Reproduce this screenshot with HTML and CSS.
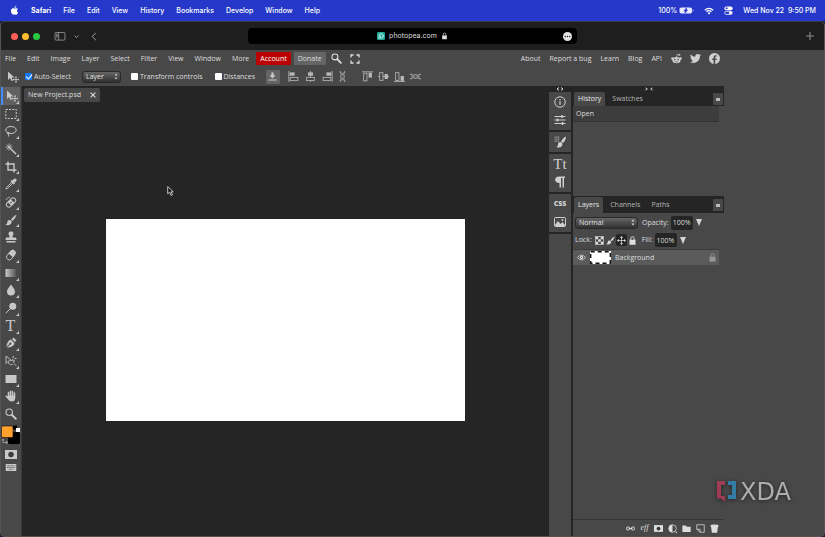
FILE: index.html
```html
<!DOCTYPE html>
<html lang="en">
<head>
<meta charset="utf-8">
<title>Photopea</title>
<link rel="stylesheet" href="styles.css">
</head>
<body>
<svg class="defs" aria-hidden="true">
  <symbol id="move" viewBox="0 0 24 24"><path fill="currentColor" d="M2 1v17l4-4 3 6 3-1-3-6h6z"/><path d="M18 12v10M13 17h10" stroke="currentColor" stroke-width="1.600"/><path fill="currentColor" d="M18 10l2.500 3h-5zM18 24l2.500-3h-5zM11 17l3-2.500v5zM24 17l-2-2.500v5z"/></symbol>
  <symbol id="updown" viewBox="0 0 8 12"><path fill="currentColor" d="M4 0l3 4H1zM4 12l3-4H1z"/></symbol>
  <symbol id="lock" viewBox="0 0 24 24"><path fill="currentColor" d="M4 10h16v13H4z"/><path d="M7.500 11V7a4.500 5 0 0 1 9 0v4" fill="none" stroke="currentColor" stroke-width="2.600"/></symbol>
  <symbol id="search" viewBox="0 0 24 24"><circle cx="8.500" cy="8.500" r="6.500" fill="none" stroke="currentColor" stroke-width="2.200"/><path d="M13.500 13.500l8 8" stroke="currentColor" stroke-width="4" stroke-linecap="round"/></symbol>
  <symbol id="brush" viewBox="0 0 24 24"><path fill="currentColor" d="M23 1c-4 2-8 6-11 10l3 3c4-4 7-8 8-13zM10.500 12c-4-1-6 2-6 5 0 2-2 4-4 4 5 3 13 1 13-6z"/></symbol>
  <symbol id="corner" viewBox="0 0 4 4"><path fill="currentColor" d="M4 0v4H0z"/></symbol>
</svg>

<header class="sysbar">
  <nav class="sysmenu" aria-label="System">
    <svg class="apple" viewBox="0 0 24 24"><path fill="#fff" d="M17 0c0 3-2 5-5 5 0-3 2-5 5-5zM21.500 17c-2 4-4 7-6.500 6-1.500-.7-3-.7-4.500 0-4 1-8-5-8-10.500 0-6 5-8 9-6 1 .5 2 .4 3 0 2.500-1.200 5-.5 6.500 1.500-4 3-3 7 .5 9z"/></svg>
    <a href="#"><b>Safari</b></a><a href="#">File</a><a href="#">Edit</a><a href="#">View</a><a href="#">History</a><a href="#">Bookmarks</a><a href="#">Develop</a><a href="#">Window</a><a href="#">Help</a>
  </nav>
  <div class="sysstatus">
    <span class="battery">100%<svg viewBox="0 0 30 14"><rect x="1" y="1" width="25" height="12" rx="3.500" fill="#e8ebff"/><path d="M27.500 5v4l2-2z" fill="#fff"/><path d="M15 2L10 8h3l-1 4 5-6h-3z" fill="#2538c9" stroke="#2538c9" stroke-width="1.500"/></svg></span>
    <svg class="wifi" viewBox="0 0 24 18"><g fill="none" stroke="#fff" stroke-width="3"><path d="M2 7q10-9 20 0M6 11q6-5.500 12 0"/></g><path fill="#fff" d="M8.500 13.500q3.500-3 7 0L12 17.500z"/></svg>
    <svg class="toggles" viewBox="0 0 24 24"><rect x="1" y="1" width="22" height="10" rx="5" fill="#fff"/><circle cx="7" cy="6" r="2.800" fill="#2538c9"/><rect x="2" y="14" width="20" height="8.500" rx="4" fill="none" stroke="#fff" stroke-width="2"/><circle cx="17" cy="18" r="4" fill="#fff"/></svg>
    <time>Wed Nov 22&nbsp; 9:50 PM</time>
  </div>
</header>

<div class="window">
  <header class="browser">
    <div class="browser-left">
      <i class="light red"></i><i class="light yellow"></i><i class="light green"></i>
      <button class="plain sidebar" aria-label="Sidebar"><svg viewBox="0 0 24 20"><g fill="none" stroke="#a5a5a5" stroke-width="1.700"><rect x="1" y="1" width="22" height="17" rx="2"/><path d="M9 1v17M3 5h4M3 8h4M3 11h4"/></g></svg></button>
      <button class="plain chevron" aria-label="Tab groups"><svg viewBox="0 0 10 10"><path d="M1 3l4 4 4-4" fill="none" stroke="#a5a5a5" stroke-width="1.800"/></svg></button>
      <button class="plain back" aria-label="Back"><svg viewBox="0 0 12 20"><path d="M10 2L2 10l8 8" fill="none" stroke="#aaa" stroke-width="2.200"/></svg></button>
    </div>
    <div class="address">
      <svg class="favicon" viewBox="0 0 24 24"><rect width="24" height="24" rx="4" fill="#20a894"/><path d="M6 21v-9a6.500 6.500 0 1 1 6.500 6.500C8 18 9 12 12.500 12" fill="none" stroke="#e4fff9" stroke-width="2.500"/></svg>
      <span>photopea.com</span>
      <svg class="padlock"><use href="#lock"/></svg>
      <button class="plain dots" aria-label="Page menu"><svg viewBox="0 0 20 20"><circle cx="10" cy="10" r="10" fill="#e4e4e4"/><g fill="#111"><circle cx="5" cy="10" r="1.500"/><circle cx="10" cy="10" r="1.500"/><circle cx="15" cy="10" r="1.500"/></g></svg></button>
    </div>
    <button class="plain newtab" aria-label="New tab"><svg viewBox="0 0 14 14"><path d="M7 0v14M0 7h14" stroke="#999" stroke-width="1.600"/></svg></button>
  </header>

  <div class="app">
    <div class="topmenu">
      <nav class="menus" aria-label="Main">
        <a href="#">File</a><a href="#">Edit</a><a href="#">Image</a><a href="#">Layer</a><a href="#">Select</a><a href="#">Filter</a><a href="#">View</a><a href="#">Window</a><a href="#">More</a>
      </nav>
      <button class="pill account">Account</button>
      <button class="pill donate">Donate</button>
      <button class="plain find" aria-label="Search"><svg><use href="#search"/></svg></button>
      <button class="plain full" aria-label="Fullscreen"><svg viewBox="0 0 20 20"><path d="M2 7V2h5M13 2h5v5M18 13v5h-5M7 18H2v-5" fill="none" stroke="currentColor" stroke-width="2.600"/></svg></button>
      <nav class="links" aria-label="Links">
        <a href="#">About</a><a href="#">Report a bug</a><a href="#">Learn</a><a href="#">Blog</a><a href="#">API</a>
        <a class="social" href="#" aria-label="Reddit"><svg viewBox="0 0 24 24"><ellipse cx="12" cy="15.500" rx="9" ry="7" fill="currentColor"/><circle cx="3" cy="12" r="2.600" fill="currentColor"/><circle cx="21" cy="12" r="2.600" fill="currentColor"/><circle cx="18.500" cy="4" r="2" fill="currentColor"/><path d="M12 9l1.500-6 5 1" fill="none" stroke="currentColor" stroke-width="1.400"/><circle cx="8.500" cy="14" r="1.700" fill="#484848"/><circle cx="15.500" cy="14" r="1.700" fill="#484848"/><path d="M8 18.500q4 2.500 8 0" fill="none" stroke="#484848" stroke-width="1.300"/></svg></a>
        <a class="social" href="#" aria-label="Twitter"><svg viewBox="0 0 24 24"><path fill="currentColor" d="M24 4.600a10 10 0 0 1-2.800.8 5 5 0 0 0 2.100-2.700 10 10 0 0 1-3.100 1.200 4.900 4.900 0 0 0-8.400 4.500A14 14 0 0 1 1.700 3.100a4.900 4.900 0 0 0 1.500 6.600 5 5 0 0 1-2.200-.6 4.900 4.900 0 0 0 4 4.900 5 5 0 0 1-2.300.1 4.900 4.900 0 0 0 4.600 3.400A10 10 0 0 1 0 19.500a14 14 0 0 0 21.500-12.400A10 10 0 0 0 24 4.600z"/></svg></a>
        <a class="social" href="#" aria-label="Facebook"><svg viewBox="0 0 24 24"><circle cx="12" cy="12" r="12" fill="currentColor"/><path fill="#484848" d="M10 24v-8.500H7V12h3V9.400C10 6.400 11.800 4.700 14.500 4.700c1.300 0 2.400.2 2.400.2v3h-1.500c-1.500 0-1.900.9-1.900 1.800V12h3.300l-.5 3.500h-2.800V24z"/></svg></a>
      </nav>
    </div>

    <div class="options">
      <svg class="ic opt-tool"><use href="#move"/></svg>
      <label class="check"><input type="checkbox" checked>Auto-Select</label>
      <span class="select opt-layer"><select aria-label="Auto-select target"><option>Layer</option></select><svg><use href="#updown"/></svg></span>
      <label class="check opt-transform"><input type="checkbox">Transform controls</label>
      <label class="check opt-dist"><input type="checkbox">Distances</label>
      <button class="plain export" aria-label="Export"><svg viewBox="0 0 20 20"><path fill="currentColor" d="M7.500 1h5v6H17l-7 7.500L3 7h4.500zM1 16.500h18V19H1z"/></svg></button>
      <div class="aligns">
        <svg viewBox="0 0 20 20"><path d="M1.500 0v20" stroke="currentColor" stroke-width="1.500"/><rect x="3" y="2.500" width="9" height="6" fill="currentColor"/><rect x="4" y="11.500" width="14" height="6" fill="none" stroke="currentColor" stroke-width="1.500"/></svg>
        <svg viewBox="0 0 20 20"><path d="M10 0v20" stroke="currentColor" stroke-width="1.500"/><rect x="5.500" y="2.500" width="9" height="6" fill="currentColor"/><rect x="3" y="11.500" width="14" height="6" fill="#484848" stroke="currentColor" stroke-width="1.500"/></svg>
        <svg viewBox="0 0 20 20"><path d="M18.500 0v20" stroke="currentColor" stroke-width="1.500"/><rect x="8" y="2.500" width="9" height="6" fill="currentColor"/><rect x="2" y="11.500" width="14" height="6" fill="none" stroke="currentColor" stroke-width="1.500"/></svg>
        <svg class="narrow" viewBox="0 0 12 20"><path d="M2 0v4h8V0M2 20v-4h8v4M3 7h6v6H3z" fill="none" stroke="currentColor" stroke-width="1.500"/></svg>
      </div>
      <div class="aligns vertical">
        <svg viewBox="0 0 20 20"><path d="M0 1.500h20" stroke="currentColor" stroke-width="1.500"/><rect x="3" y="4" width="6" height="14" fill="none" stroke="currentColor" stroke-width="1.500"/><rect x="12" y="3" width="6" height="9" fill="currentColor"/></svg>
        <svg viewBox="0 0 20 20"><path d="M0 10h20" stroke="currentColor" stroke-width="1.500"/><rect x="3" y="3" width="6" height="14" fill="#484848" stroke="currentColor" stroke-width="1.500"/><rect x="12" y="5.500" width="6" height="9" fill="currentColor"/></svg>
        <svg viewBox="0 0 20 20"><path d="M0 19h20" stroke="currentColor" stroke-width="1.500"/><rect x="3" y="3" width="6" height="14" fill="none" stroke="currentColor" stroke-width="1.500"/><rect x="12" y="9" width="6" height="9" fill="currentColor"/></svg>
        <svg viewBox="0 0 20 20"><path d="M0 6h4v8H0M20 6h-4v8h4M7 7h6v6H7z" fill="none" stroke="currentColor" stroke-width="1.500"/></svg>
      </div>
    </div>

    <div class="workspace">
      <aside class="toolbar">
        <div class="tools">
          <button class="tool active" aria-label="Move"><svg class="ic"><use href="#move"/></svg><svg class="tri"><use href="#corner"/></svg></button>
          <button class="tool" aria-label="Marquee"><svg class="ic" viewBox="0 0 24 24"><rect x="1.500" y="3" width="21" height="18" fill="none" stroke="currentColor" stroke-width="2" stroke-dasharray="4 2.500"/></svg><svg class="tri"><use href="#corner"/></svg></button>
          <button class="tool" aria-label="Lasso"><svg class="ic" viewBox="0 0 24 24"><g fill="none" stroke="currentColor" stroke-width="2"><ellipse cx="12" cy="10" rx="10.500" ry="7"/><path d="M6 14c-2 1-2 4 0 4s3-3 0-4M6 18q3 1 1 5"/></g></svg><svg class="tri"><use href="#corner"/></svg></button>
          <button class="tool" aria-label="Magic wand"><svg class="ic" viewBox="0 0 24 24"><path d="M9 9l13 13" stroke="currentColor" stroke-width="3"/><path d="M8 1v14M1 8h14M3 3l10 10M13 3L3 13" stroke="currentColor" stroke-width="1.500"/></svg><svg class="tri"><use href="#corner"/></svg></button>
          <button class="tool" aria-label="Crop"><svg class="ic" viewBox="0 0 24 24"><path d="M6 1v17h17M1 6h17v17" fill="none" stroke="currentColor" stroke-width="2.800"/></svg><svg class="tri"><use href="#corner"/></svg></button>
          <button class="tool" aria-label="Eyedropper"><svg class="ic" viewBox="0 0 24 24"><path d="M14 8L3 19l-1 3 3-1L16 10" fill="none" stroke="currentColor" stroke-width="1.800"/><path fill="currentColor" d="M11 6l2-2 2 1c3-5 6-5 7-3 2 1 2 4-3 7l1 2-2 2z"/></svg><svg class="tri"><use href="#corner"/></svg></button>
          <button class="tool" aria-label="Healing"><svg class="ic" viewBox="0 0 24 24"><g transform="rotate(-45 12 13)"><rect x="1" y="8" width="22" height="10" rx="5" fill="none" stroke="currentColor" stroke-width="2"/><path fill="currentColor" d="M8 8h8v10H8z"/><circle cx="12" cy="13" r="1.500" fill="#484848"/></g><path d="M2 8q2-5 8-6" fill="none" stroke="currentColor" stroke-width="1.500"/></svg><svg class="tri"><use href="#corner"/></svg></button>
          <button class="tool" aria-label="Brush"><svg class="ic"><use href="#brush"/></svg><svg class="tri"><use href="#corner"/></svg></button>
          <button class="tool" aria-label="Stamp"><svg class="ic" viewBox="0 0 24 24"><path fill="currentColor" d="M9 10C5 4 8 1 12 1s7 3 3 9v3h6q2 0 2 5H1q0-5 2-5h6zM3 20h18v3H3z"/></svg></button>
          <button class="tool" aria-label="Eraser"><svg class="ic" viewBox="0 0 24 24"><g transform="rotate(38 12 12)"><rect x="6.500" y="1" width="11" height="22" rx="5.500" fill="none" stroke="currentColor" stroke-width="1.800"/><path fill="currentColor" d="M6.500 13V7a5.500 6 0 0 1 11 0v6z"/></g></svg><svg class="tri"><use href="#corner"/></svg></button>
          <button class="tool" aria-label="Gradient"><svg class="ic" viewBox="0 0 24 24"><defs><linearGradient id="gr"><stop stop-color="#c8c8c8"/><stop offset="1" stop-color="#505050"/></linearGradient></defs><path fill="url(#gr)" d="M1 4h22v16H1z"/></svg><svg class="tri"><use href="#corner"/></svg></button>
          <button class="tool" aria-label="Blur"><svg class="ic" viewBox="0 0 24 24"><path fill="currentColor" d="M12 1c3 5 8 9 8 14a8 8 0 0 1-16 0C4 10 9 6 12 1z"/></svg><svg class="tri"><use href="#corner"/></svg></button>
          <button class="tool" aria-label="Dodge"><svg class="ic" viewBox="0 0 24 24"><circle cx="15.500" cy="8.500" r="7" fill="currentColor"/><path d="M11 13L1.500 22.500" stroke="currentColor" stroke-width="2"/></svg><svg class="tri"><use href="#corner"/></svg></button>
          <button class="tool letter" aria-label="Type">T<svg class="tri"><use href="#corner"/></svg></button>
          <button class="tool" aria-label="Pen"><svg class="ic" viewBox="0 0 24 24"><path fill="currentColor" d="M17 1l6 6-3 3-6-6zM12 5l7 7c-1 6-6 8-15 10l6-7a2 2 0 1 0-1-1l-7 6C4 12 7 6 12 5z"/></svg><svg class="tri"><use href="#corner"/></svg></button>
          <button class="tool" aria-label="Path select"><svg class="ic" viewBox="0 0 24 24"><path d="M2 2v15l4-4 3 6M2 2l11 9-6 1" fill="none" stroke="currentColor" stroke-width="1.800"/><path d="M17 2q-5 10 6 20M11 19h4M19 7h4M16 12h4" fill="none" stroke="currentColor" stroke-width="2" stroke-dasharray="4 2"/></svg><svg class="tri"><use href="#corner"/></svg></button>
          <button class="tool" aria-label="Rectangle"><svg class="ic" viewBox="0 0 24 24"><path fill="currentColor" d="M1 4h22v16H1z"/></svg><svg class="tri"><use href="#corner"/></svg></button>
          <button class="tool" aria-label="Hand"><svg class="ic" viewBox="0 0 24 24"><path d="M7 13V5M11 12V2.500M15 12V3M19 13V6M7 17l-4.500-4.500" stroke="currentColor" stroke-width="3" stroke-linecap="round"/><path fill="currentColor" d="M5.500 11h15v5c0 5-3 7-7 7s-6-2-9-7z"/></svg><svg class="tri"><use href="#corner"/></svg></button>
          <button class="tool" aria-label="Zoom"><svg class="ic"><use href="#search"/></svg></button>
        </div>
        <button class="plain colors" aria-label="Colors"><svg viewBox="0 0 20 20"><rect x="7" y="7" width="12" height="12" rx="1.500" fill="#000"/><rect x="12" y="0.500" width="4" height="4" fill="#000"/><rect x="15" y="3" width="4" height="4" fill="#fff"/><rect x="0.500" y="1" width="11.500" height="11.500" rx="1.500" fill="#ffa12b" stroke="#111" stroke-width=".6"/><path d="M2 14.500v3h4M1 15.500l1-1.500 1 1.500M5 16l2 1.500L5 19" fill="none" stroke="#aaa" stroke-width=".8"/></svg></button>
        <button class="plain mode" aria-label="Quick mask"><svg viewBox="0 0 24 18"><path fill="currentColor" d="M0 0h24v18H0z"/><circle cx="12" cy="9" r="5.500" fill="#3a3a3a"/></svg></button>
        <button class="plain mode keys" aria-label="Keyboard"><svg viewBox="0 0 24 16"><path fill="currentColor" d="M0 0h24v16H0z"/><path d="M2 4h20M3 8h18M7 12h10" stroke="#505050" stroke-width="2" stroke-dasharray="2 1.200"/></svg></button>
      </aside>

      <main class="stage">
        <div class="doc-tabs"><div class="doc-tab"><span>New Project.psd</span><button class="plain close" aria-label="Close"><svg viewBox="0 0 10 10"><path d="M1 1l8 8M9 1L1 9" stroke="#e0e0e0" stroke-width="1.700"/></svg></button></div></div>
        <div class="canvas-area"><div class="canvas"></div></div>
        <svg class="cursor" viewBox="0 0 12 18"><path d="M1 1v13l3.500-3 2.500 6 2.500-1L7 10.500h4z" fill="#111" stroke="#e4e4e4" stroke-width="1.500"/></svg>
      </main>

      <aside class="dock">
        <div class="expand"><svg viewBox="0 0 16 8"><path d="M6 1L2 4l4 3M10 1l4 3-4 3" fill="none" stroke="#ddd" stroke-width="2"/></svg></div>
        <div class="group">
          <button aria-label="Info"><svg viewBox="0 0 24 24"><circle cx="12" cy="12" r="10.500" fill="none" stroke="currentColor" stroke-width="2"/><path d="M12 10.500v7M12 6v2.500" stroke="currentColor" stroke-width="2.500"/></svg></button>
          <button aria-label="Adjustments"><svg viewBox="0 0 24 24"><path d="M1 5h22M1 12h22M1 19h22" stroke="currentColor" stroke-width="2"/><path d="M16 2v6M7 9v6M17 16v6" stroke="currentColor" stroke-width="3"/></svg></button>
        </div>
        <div class="group"><button aria-label="Brushes"><svg viewBox="0 0 24 24"><path fill="currentColor" d="M24 1c-4 1-8 6-10 10l4 3c4-4 6-8 6-13zM13 12c-4 0-5 2-5 5 0 2-1 4-3 5 6 3 12 0 12-7z"/><path d="M1 2h10M1 6h10M1 10h9" stroke="#999" stroke-width="2.500" stroke-dasharray="2.500 1"/></svg></button></div>
        <div class="group">
          <button class="tt" aria-label="Character">Tt</button>
          <button aria-label="Paragraph"><svg viewBox="0 0 24 24"><path fill="currentColor" d="M22 1v3h-2v19h-3V4h-3v19h-3V14C-1 14 0 1 10 1z"/></svg></button>
        </div>
        <div class="group">
          <button class="css" aria-label="CSS">CSS</button>
          <button aria-label="Image"><svg viewBox="0 0 24 24"><rect x="1" y="3" width="22" height="18" rx="2" fill="none" stroke="currentColor" stroke-width="2"/><path fill="currentColor" d="M2 18l6-8 5 6 4-4 5 6v2H2z"/><circle cx="17" cy="8" r="2" fill="currentColor"/></svg></button>
        </div>
        <div class="group rest"></div>
      </aside>

      <aside class="panels">
        <div class="expand"><svg viewBox="0 0 20 8"><path d="M1 1l5 3-5 3M19 1l-5 3 5 3" fill="none" stroke="#ddd" stroke-width="2"/></svg></div>
        <section class="history">
          <div class="tabs"><button class="tab on">History</button><button class="tab">Swatches</button><button class="more" aria-label="History menu"><i></i></button></div>
          <div class="entry">Open</div>
        </section>
        <section class="layers">
          <div class="tabs"><button class="tab on">Layers</button><button class="tab">Channels</button><button class="tab">Paths</button><button class="more" aria-label="Layers menu"><i></i></button></div>
          <div class="row">
            <span class="select blend"><select aria-label="Blend mode"><option>Normal</option></select><svg><use href="#updown"/></svg></span>
            <label for="opacity">Opacity:</label><input class="num" id="opacity" value="100%"><i class="drop"></i>
          </div>
          <div class="row lockrow">
            <span>Lock:</span>
            <span class="locks">
              <button class="plain" aria-label="Lock transparency"><svg viewBox="0 0 20 20"><rect x="1" y="1" width="18" height="18" fill="none" stroke="currentColor" stroke-width="1.500"/><path fill="currentColor" d="M2 2h5v5H2zM13 2h5v5h-5zM7 7h6v6H7zM2 13h5v5H2zM13 13h5v5h-5z"/></svg></button>
              <button class="plain" aria-label="Lock pixels"><svg><use href="#brush"/></svg></button>
              <button class="plain pressed" aria-label="Lock position"><svg viewBox="0 0 24 24"><path d="M12 2v20M2 12h20" stroke="currentColor" stroke-width="2"/><path fill="currentColor" d="M12 0l4 5H8zM12 24l4-5H8zM0 12l5-4v8zM24 12l-5-4v8z"/></svg></button>
              <button class="plain" aria-label="Lock all"><svg><use href="#lock"/></svg></button>
            </span>
            <label for="fill">Fill:</label><input class="num" id="fill" value="100%"><i class="drop"></i>
          </div>
          <div class="layer">
            <svg class="eye" viewBox="0 0 24 16"><path d="M1 8q11-13 22 0-11 13-22 0z" fill="none" stroke="currentColor" stroke-width="2"/><circle cx="12" cy="8" r="4.500" fill="currentColor"/><circle cx="12" cy="8" r="1.500" fill="#5b5b5b"/></svg>
            <svg class="thumb" viewBox="0 0 21 13"><path fill="#fff" d="M0 0h21v13H0z"/><rect x=".7" y=".7" width="19.600" height="11.600" fill="none" stroke="#111" stroke-width="1.400" stroke-dasharray="4 3"/></svg>
            <span>Background</span>
            <svg class="layer-lock"><use href="#lock"/></svg>
          </div>
          <div class="actions">
            <button class="plain" aria-label="Link"><svg viewBox="0 0 24 24"><g fill="none" stroke="currentColor" stroke-width="2.600"><rect x="1.500" y="8" width="8" height="8" rx="3"/><rect x="14.500" y="8" width="8" height="8" rx="3"/><path d="M7 12h10"/></g></svg></button>
            <button class="plain eff" aria-label="Effects">eff</button>
            <button class="plain" aria-label="Mask"><svg viewBox="0 0 24 24"><path fill="currentColor" d="M0 3h24v18H0z"/><circle cx="12" cy="12" r="5" fill="#333"/></svg></button>
            <button class="plain" aria-label="Adjustment"><svg viewBox="0 0 24 24"><circle cx="12" cy="12" r="10" fill="none" stroke="currentColor" stroke-width="2"/><path fill="currentColor" d="M12 2a10 10 0 0 0 0 20zM24 19v5h-5z"/></svg></button>
            <button class="plain" aria-label="Folder"><svg viewBox="0 0 24 24"><path fill="currentColor" d="M1 4h9l3 3h10v14H1z"/></svg></button>
            <button class="plain" aria-label="New layer"><svg viewBox="0 0 24 24"><path d="M2 2h20v20H11l-9-8zM11 22v-8H2" fill="none" stroke="currentColor" stroke-width="2"/></svg></button>
            <button class="plain" aria-label="Delete"><svg viewBox="0 0 24 24"><path fill="currentColor" d="M3 8h18l-2 15H5z"/><ellipse cx="12" cy="5" rx="11" ry="3.500" fill="currentColor"/></svg></button>
          </div>
        </section>
      </aside>

      <div class="spare">
        <div class="brand"><svg viewBox="0 0 22 24"><path fill="#9c3d54" d="M9 1v4H5v11h4v6l-4-3.500H1V1z"/><path fill="#347da6" d="M12 1h8v18h-8v-4h4V5h-4z"/></svg><span>XDA</span></div>
      </div>
    </div>
  </div>
</div>
</body>
</html>
```
FILE: styles.css
```css
* { box-sizing: border-box; }
html, body { height: 100%; }
body {
  margin: 0;
  display: flex;
  flex-direction: column;
  overflow: hidden;
  background: #17243c;
  color: #dedede;
  font: 7px/10px "Open Sans", "Noto Sans", sans-serif;
}
a { color: inherit; text-decoration: none; }
svg { display: block; flex: none; }
button, input, select { font: inherit; color: inherit; margin: 0; padding: 0; border: 0; }
button { display: flex; align-items: center; justify-content: center; flex: none; }
.plain { background: none; }
.defs { position: absolute; width: 0; height: 0; }

/* System menu bar */
.sysbar {
  display: flex;
  justify-content: space-between;
  align-items: center;
  height: 21px;
  flex: none;
  padding: 0 9px 0 10px;
  background: #2538c9;
  color: #fff;
  font-family: Inter, sans-serif;
  font-weight: 500;
}
.sysmenu { display: flex; align-items: center; gap: 12px; }
.apple { width: 9px; height: 9px; }
.sysstatus { display: flex; align-items: center; gap: 10px; }
.battery { display: flex; align-items: center; gap: 2px; }
.battery svg { width: 15px; height: 7px; }
.wifi { width: 10px; height: 8px; }
.toggles { width: 9px; height: 9px; }

/* Browser window */
.window {
  flex: 1;
  min-height: 0;
  display: flex;
  flex-direction: column;
  border: 1px solid #555;
  border-top-color: #3a3a4a;
  border-radius: 5px;
  overflow: hidden;
  background: #484848;
}
.browser {
  display: grid;
  grid-template-columns: 3fr 4fr 3fr;
  align-items: center;
  height: 28px;
  flex: none;
  background: #1e1e1e;
}
.browser-left { display: flex; align-items: center; padding-left: 10px; gap: 4px; }
.light { width: 7px; height: 7px; border-radius: 50%; }
.red { background: #ff5f57; }
.yellow { background: #febc2e; }
.green { background: #28c840; }
.sidebar { margin-left: 10px; }
.sidebar svg { width: 12px; height: 9px; }
.chevron { margin-left: 4px; }
.chevron svg { width: 5px; height: 5px; }
.back { margin-left: 8px; }
.back svg { width: 6px; height: 9px; }
.address {
  position: relative;
  display: flex;
  align-items: center;
  justify-content: center;
  gap: 4px;
  height: 16px;
  border-radius: 4px;
  background: #000;
  font-family: Inter, sans-serif;
}
.favicon { width: 8px; height: 8px; }
.padlock { width: 7px; height: 8px; }
.dots { position: absolute; right: 5px; }
.dots svg { width: 9px; height: 9px; }
.newtab { justify-self: end; margin-right: 10px; }
.newtab svg { width: 8px; height: 8px; }

/* Application menus */
.app { flex: 1; min-height: 0; display: flex; flex-direction: column; }
.topmenu { display: flex; align-items: center; height: 17px; flex: none; padding-left: 4px; }
.menus { display: flex; gap: 11px; margin-right: 7px; }
.pill { height: 13px; padding: 0 4px; border-radius: 1px; }
.account { background: #ba0000; color: #fff; margin-right: 3px; }
.donate { background: #646464; }
.find { margin: 0 8px 0 5px; }
.find svg { width: 11px; height: 11px; }
.full svg { width: 10px; height: 10px; }
.links { display: flex; align-items: center; gap: 9px; margin-left: auto; padding-right: 105px; }
.social { margin-right: -1px; color: #cfcfcf; }
.social svg { width: 11px; height: 11px; }

.options { display: flex; align-items: center; height: 19px; flex: none; padding-left: 6px; color: #c8c8c8; }
.ic { width: 12px; height: 12px; }
.opt-tool { margin-right: 6px; }
.check { display: flex; align-items: center; gap: 2px; color: #dedede; }
.check input {
  appearance: none;
  width: 7px;
  height: 7px;
  border-radius: 1px;
  background: #fff;
  display: flex;
  justify-content: center;
}
.check input:checked { background: #1477f8; }
.check input:checked::before {
  content: "";
  width: 3px;
  height: 5px;
  border: solid #fff;
  border-width: 0 1px 1px 0;
  transform: rotate(40deg);
}
.select { position: relative; display: flex; align-items: center; }
.select select {
  appearance: none;
  width: 100%;
  height: 12px;
  padding-left: 3px;
  border: 1px solid #292929;
  border-radius: 3px;
  background: linear-gradient(#666, #303030);
  color: #e6e6e6;
}
.select svg { position: absolute; right: 3px; width: 4px; height: 7px; pointer-events: none; }
.opt-layer { width: 39px; margin: 0 10px 0 11px; }
.opt-dist { margin-left: 12px; }
.export { width: 14px; height: 14px; margin: 0 8px 0 11px; border-radius: 1px; background: #646464; }
.export svg { width: 9px; height: 9px; }
.aligns { display: flex; gap: 6px; margin-right: 16px; }
.aligns svg { width: 11px; height: 11px; color: #b8b8b8; }
.aligns .narrow { width: 7px; }
.vertical { gap: 5px; }

/* Workspace */
.workspace { flex: 1; min-height: 0; display: flex; }
.toolbar { width: 21px; flex: none; display: flex; flex-direction: column; color: #c8c8c8; border-right: 1px solid #383838; padding-top: 1px; }
.tools { display: grid; grid-auto-rows: 1fr; height: 336px; }
.tool { position: relative; width: 19px; height: 100%; background: none; }
.tool.active { background: #606060; border-left: 2px solid #3f8cff; }
.tri { position: absolute; right: 1px; bottom: 1px; width: 3px; height: 3px; }
.letter { font: 16px/16px "Liberation Serif", serif; }
.colors { margin-top: 2px; }
.colors svg { width: 20px; height: 20px; }
.mode { margin: 5px 0 0 4px; align-self: flex-start; }
.mode svg { width: 12px; height: 9px; }
.keys svg { height: 7px; }

.stage { position: relative; flex: 1; min-width: 0; display: flex; flex-direction: column; background: #252525; }
.doc-tabs { display: flex; padding: 2px; }
.doc-tab { display: flex; align-items: center; gap: 9px; height: 14px; padding: 0 4px; border-radius: 2px; background: #484848; }
.close svg { width: 6px; height: 6px; }
.canvas-area { flex: 1; min-height: 0; display: flex; align-items: center; justify-content: center; }
.canvas { width: 68%; aspect-ratio: 16 / 9; background: #fff; }
.cursor { position: absolute; left: 145px; top: 100px; width: 7px; height: 10px; }

.expand { display: flex; justify-content: center; align-items: center; height: 6px; flex: none; background: #252525; }
.expand svg { width: 8px; height: 4px; }
.dock { display: flex; flex-direction: column; width: 24px; flex: none; gap: 2px; background: #252525; border-right: 2px solid #252525; color: #cfcfcf; }
.dock .expand { margin-bottom: -2px; }
.group { background: #484848; padding: 1px 0; }
.group button { width: 100%; height: 18px; background: none; }
.group svg { width: 12px; height: 12px; }
.rest { flex: 1; }
.group .tt { font: 15px/16px "Liberation Serif", serif; }
.group .css { font-weight: 800; }

.panels { display: flex; flex-direction: column; width: 151px; flex: none; }
.tabs { display: flex; align-items: center; height: 14px; padding: 0 1px; background: #252525; }
.tab { height: 100%; padding: 0 4px; background: none; color: #b4b4b4; }
.tab + .tab { margin-left: 3px; }
.tab.on { background: #484848; color: #e8e8e8; border-radius: 2px 2px 0 0; }
.more { width: 10px; height: 12px; margin-left: auto; border-radius: 1px; background: #484848; }
.more i { width: 4px; height: 3px; background: #bbb; }
.history { height: 104px; flex: none; }
.entry { margin-right: 5px; padding: 3px; height: 16px; background: #3d3d3d; border-bottom: 1px solid #333; }
.layers { flex: 1; min-height: 0; display: flex; flex-direction: column; border-top: 1px solid #252525; }
.layers .tabs { height: 16px; flex: none; }
.row { display: flex; align-items: center; gap: 2px; height: 19px; flex: none; padding-left: 2px; }
.lockrow { height: 16px; }
.blend { width: 63px; margin-right: 2px; }
.num { width: 22px; height: 14px; text-align: center; border-radius: 2px; background: #252525; }
.drop { border: solid transparent; border-width: 7px 3px 0; border-top-color: #d5d5d5; margin-left: 1px; }
.locks { display: flex; align-items: center; margin-right: 2px; }
.locks button { width: 11px; height: 12px; }
.locks svg { width: 9px; height: 9px; }
.locks .pressed { background: #252525; border-radius: 2px; }
.layer { display: flex; align-items: center; height: 16px; flex: none; margin: 1px 5px 0 0; padding: 0 2px 0 4px; background: #5b5b5b; border-top: 1px solid #3a3a3a; }
.eye { width: 9px; height: 7px; margin-right: 4px; }
.thumb { width: 21px; height: 13px; margin-right: 4px; }
.layer-lock { width: 9px; height: 9px; margin-left: auto; color: #969696; }
.actions { display: flex; justify-content: flex-end; align-items: center; gap: 5px; height: 17px; margin-top: auto; padding-right: 5px; border-top: 1px solid #353535; }
.actions svg { width: 9px; height: 9px; }
.actions .eff { width: 9px; font: italic 8px/10px "Liberation Serif", serif; }

/* Unused strip right of the panels */
.spare { width: 100px; flex: none; display: flex; align-items: flex-end; }
.brand { position: relative; right: 8px; display: flex; align-items: center; gap: 2px; margin-bottom: 30px; color: #adadad; filter: drop-shadow(0 1px 2px #222); }
.brand svg { width: 22px; height: 24px; }
.brand span { font: 24px/28px "DejaVu Sans", sans-serif; }
```
